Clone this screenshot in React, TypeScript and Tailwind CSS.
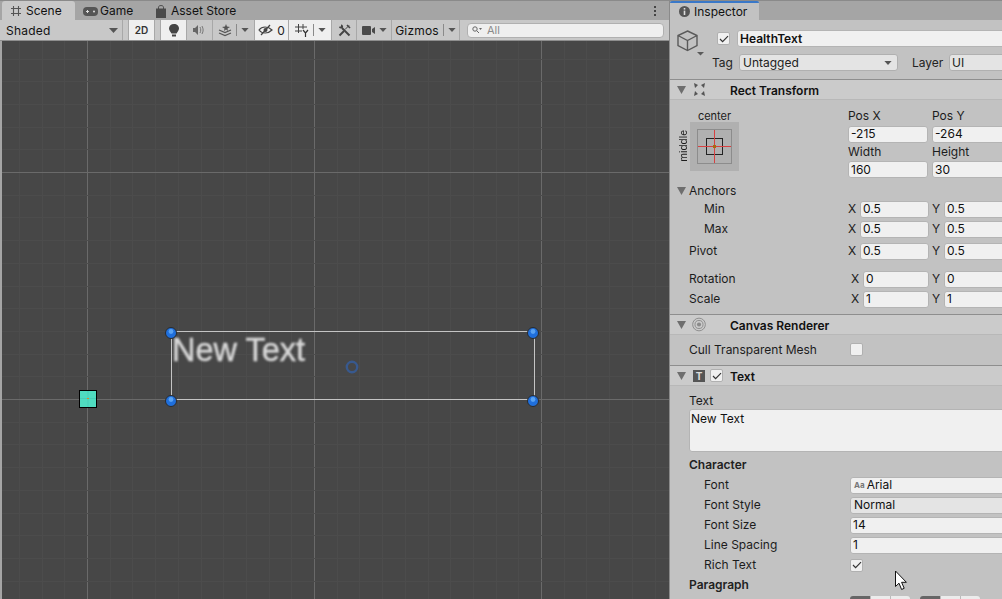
import React from "react";

const Tri = ({ c = "#555", w = 9, h = 5 }: { c?: string; w?: number; h?: number }) => (
  <svg width={w} height={h} viewBox="0 0 9 5" className="shrink-0"><path d="M0 0H9L4.5 5Z" fill={c} /></svg>
);

const Foldout = () => (
  <svg width="9" height="8" viewBox="0 0 9 8" className="shrink-0"><path d="M0 0H9L4.5 8Z" fill="#6e6e6e" /></svg>
);

const Check = () => (
  <svg width="10" height="8" viewBox="0 0 10 8"><path d="M1 4L3.6 6.6L9 1.2" fill="none" stroke="#333" strokeWidth="1.2" /></svg>
);

const Checkbox = ({ on }: { on?: boolean }) => (
  <div className="w-[13px] h-[13px] rounded-[2px] bg-[#f0f0f0] border border-[#b0b0b0] flex items-center justify-center shrink-0">
    {on ? <Check /> : null}
  </div>
);

const Field = ({ w, children, cls = "" }: { w: string; children: React.ReactNode; cls?: string }) => (
  <div className={`${w} ${cls} h-[17px] shrink-0 rounded-[3px] bg-[#f0f0f0] border border-[#b4b4b4] pl-[2px] flex items-center text-[12px] leading-none text-[#111]`}>
    {children}
  </div>
);

const ToolBtn = ({ w, on, children }: { w: string; on?: boolean; children: React.ReactNode }) => (
  <div className={`${w} ${on ? "bg-[#efefef]" : "bg-[#c8c8c8]"} h-[20px] shrink-0 flex items-center justify-center gap-[4px] border-r border-[#a8a8a8]`}>
    {children}
  </div>
);

const Sep = () => <div className="w-px h-[12px] bg-[#8a8a8a]" />;

const Vec = ({ label, sub, offset, top = "" }: { label: string; sub?: boolean; offset?: boolean; top?: string }) => {
  const val = label === "Rotation" ? "0" : label === "Scale" ? "1" : "0.5";
  return (
    <div className={`flex items-center h-[20px] ${top}`}>
      <div className={`${offset ? "w-[181px]" : "w-[178px]"} ${sub ? "pl-[34px]" : "pl-[19px]"} shrink-0`}>{label}</div>
      <div className="w-[12px] shrink-0">X</div>
      <Field w={offset ? "w-[66px]" : "w-[69px]"}>{val}</Field>
      <div className="w-[3px] shrink-0" />
      <div className="w-[12px] shrink-0">Y</div>
      <Field w="w-[80px]">{val}</Field>
    </div>
  );
};

const Prop = ({ label, children }: { label: string; children: React.ReactNode }) => (
  <div className="flex items-center h-[20px]">
    <div className="w-[180px] pl-[34px] shrink-0">{label}</div>
    {children}
  </div>
);

const CompHeader = ({ icon, check, title, top = "" }: { icon: React.ReactNode; check?: boolean; title: string; top?: string }) => (
  <div className={`h-[20px] ${top} bg-[#cbcbcb] border-b border-[#b8b8b8] flex items-center shrink-0`}>
    <div className="w-[7px] shrink-0" />
    <Foldout />
    <div className="w-[6px] shrink-0" />
    <div className="w-[14px] shrink-0 flex items-center justify-center">{icon}</div>
    {check ? (
      <>
        <div className="w-[4px] shrink-0" />
        <Checkbox on />
        <div className="w-[7px] shrink-0" />
      </>
    ) : (
      <div className="w-[24px] shrink-0" />
    )}
    <div className="font-semibold text-[#111] pt-[2px]">{title}</div>
  </div>
);

const Scene = () => {
  const xs = Array.from({ length: 32 }, (_, i) => 87 - 68.1 + i * 22.7 - 2);
  const ys = Array.from({ length: 26 }, (_, i) => 172 - 41 - 113.5 + i * 22.7);
  const handles = [
    [171, 333],
    [533, 333],
    [171, 401],
    [533, 401],
  ];
  return (
    <div className="relative flex-1 ml-[2px] bg-[#474747] overflow-hidden">
      <svg width="667" height="558" className="absolute left-0 top-0">
        {xs.map((x, i) => (
          <line key={"x" + i} x1={Math.round(x) + 0.5} x2={Math.round(x) + 0.5} y1={0} y2={558} stroke={(i - 3) % 10 === 0 ? "#6a6a6a" : "#4c4c4c"} />
        ))}
        {ys.map((y, i) => (
          <line key={"y" + i} y1={Math.round(y) + 0.5} y2={Math.round(y) + 0.5} x1={0} x2={667} stroke={(i - 5) % 10 === 0 ? "#6a6a6a" : "#4c4c4c"} />
        ))}
      </svg>
      <div className="absolute left-[169px] top-[290px] w-[364px] h-[69px] border border-[#c4c4c4]" />
      <div className="absolute left-[170px] top-[287px] text-[32.5px] leading-[44px] text-[#d8d8d8] blur-[0.8px] [-webkit-text-stroke:0.5px_#d8d8d8] whitespace-nowrap font-['Liberation_Sans',sans-serif]">New Text</div>
      <svg width="667" height="558" className="absolute left-0 top-0">
        {handles.map(([x, y], i) => (
          <g key={i}>
            <circle cx={x - 2} cy={y - 41} r="5.5" fill="#1f6fdc" stroke="#2b2b2b" strokeWidth="1" />
            <circle cx={x - 2} cy={y - 42.5} r="2.4" fill="#58a2f2" />
          </g>
        ))}
        <circle cx="350" cy="326" r="5.2" fill="none" stroke="#38598e" strokeWidth="2.4" />
        <rect x="77.5" y="349.5" width="17" height="17" fill="#4fdcc0" stroke="#000" />
        <line x1="86" y1="350" x2="86" y2="366" stroke="#48cdb8" />
        <line x1="78" y1="357.5" x2="94" y2="357.5" stroke="#48cdb8" />
        <rect x="85" y="357" width="2" height="1" fill="#e08a20" />
      </svg>
    </div>
  );
};

export default function App() {
  return (
    <div className="w-[1002px] h-[599px] flex overflow-hidden bg-[#a5a5a5] text-[12px] leading-none text-[#1c1c1c] font-['Inter',sans-serif]">
      <div className="w-[669px] h-full flex flex-col shrink-0">
        <div className="h-[20px] flex items-end border-t border-[#8a8a8a] pl-[2px] text-[#111] shrink-0">
          <div className="w-[73px] h-[19px] pt-px bg-[#c9c9c9] rounded-t-[3px] flex items-center pl-[8px] gap-[4px]">
            <svg width="12" height="12" viewBox="0 0 12 12"><path d="M3.5 1V11M8.5 1V11M1 3.5H11M1 8.5H11" stroke="#555" strokeWidth="1.1" /></svg>
            <span className="text-[12px]">Scene</span>
          </div>
          <div className="w-[73px] h-[19px] pt-px flex items-center pl-[8px] gap-[2px]">
            <svg width="15" height="9" viewBox="0 0 15 9"><rect width="15" height="9" rx="4" fill="#555" /><path d="M3 4.5H6M4.5 3V6" stroke="#ddd" /><circle cx="11" cy="4.5" r="1" fill="#ddd" /></svg>
            <span>Game</span>
          </div>
          <div className="flex-1 h-[19px] pt-px flex items-center pl-[8px] gap-[5px]">
            <svg width="10" height="13" viewBox="0 0 10 13"><path d="M0 3.5H10V13H0Z" fill="#4a4a4a" /><path d="M2.5 4V2.2C2.5 0 7.5 0 7.5 2.2V4" fill="none" stroke="#4a4a4a" /></svg>
            <span>Asset Store</span>
          </div>
          <div className="h-[19px] w-[14px] flex flex-col items-center justify-center gap-[2px] mr-[7px]">
            <div className="w-[2px] h-[2px] bg-[#444]" />
            <div className="w-[2px] h-[2px] bg-[#444]" />
            <div className="w-[2px] h-[2px] bg-[#444]" />
          </div>
        </div>
        <div className="h-[21px] bg-[#c8c8c8] border-b border-[#8e8e8e] flex items-center shrink-0 pl-[6px]">
          <div className="w-[116px] flex items-center justify-between pr-[4px] shrink-0"><span className="text-[#111] tracking-[0.2px] pt-px">Shaded</span><Tri /></div>
          <div className="w-[7px] h-[20px] border-x border-[#a8a8a8] shrink-0" />
          <ToolBtn w="w-[26px]" on><span className="text-[10px] font-semibold text-[#333]">2D</span></ToolBtn>
          <div className="w-[6px] h-[20px] border-r border-[#a8a8a8] shrink-0" />
          <ToolBtn w="w-[26px]" on>
            <svg width="10" height="13" viewBox="0 0 10 13"><path d="M5 0C2 0 0 2 0 4.5C0 6.5 1.5 7.5 2.5 9.5H7.5C8.5 7.5 10 6.5 10 4.5C10 2 8 0 5 0Z" fill="#444" /><rect x="3" y="10.5" width="4" height="2" fill="#444" /></svg>
          </ToolBtn>
          <ToolBtn w="w-[26px]">
            <svg width="13" height="10" viewBox="0 0 13 10"><path d="M0 3H2L5 0V10L2 7H0Z" fill="#666" /><path d="M7 2C8 4 8 6 7 8M9 1C10.5 4 10.5 6 9 9" fill="none" stroke="#777" /></svg>
          </ToolBtn>
          <ToolBtn w="w-[42px]">
            <svg width="14" height="13" viewBox="0 0 14 13"><path d="M1 6L7 8.5L13 6M1 9L7 11.5L13 9" fill="none" stroke="#555" strokeWidth="1.2" /><path d="M8 0L9 2.5L12 3L9.5 4.5L10 7L8 5.5L6 7L6.5 4.5L4 3L7 2.5Z" fill="#555" /></svg>
            <Sep />
            <Tri w={8} h={4} />
          </ToolBtn>
          <ToolBtn w="w-[34px]" on>
            <svg width="15" height="12" viewBox="0 0 15 12"><path d="M1 6C4 2 10 2 14 6C10 10 4 10 1 6Z" fill="none" stroke="#444" strokeWidth="1.2" /><circle cx="7.5" cy="6" r="2" fill="#444" /><path d="M3 11L12 1" stroke="#444" strokeWidth="1.2" /></svg>
            <span className="text-[#222] leading-none pt-px">0</span>
          </ToolBtn>
          <ToolBtn w="w-[43px]" on>
            <svg width="14" height="13" viewBox="0 0 14 13"><path d="M3.5 0V9M8 0V5M0 3H12M0 7H7" stroke="#444" /><path d="M8 6L10.5 9L13 6M10.5 9V13" fill="none" stroke="#333" strokeWidth="1.2" /></svg>
            <Sep />
            <Tri w={8} h={4} />
          </ToolBtn>
          <ToolBtn w="w-[25px]">
            <svg width="13" height="13" viewBox="0 0 13 13"><path d="M1.5 11.5L6 7" stroke="#444" strokeWidth="2" /><path d="M7 5.5L11 1.5" stroke="#444" strokeWidth="1" /><path d="M9 1L12 4" stroke="#444" strokeWidth="1.6" /><path d="M4 4L11.5 11.5" stroke="#444" strokeWidth="2" /><path d="M1 3.5A2.5 2.5 0 0 0 5 3.5A2.5 2.5 0 0 0 3 0.5V2.5H1.5Z" fill="#444" /></svg>
          </ToolBtn>
          <ToolBtn w="w-[35px]">
            <svg width="13" height="9" viewBox="0 0 13 9"><rect width="9" height="9" rx="1" fill="#4a4a4a" /><path d="M10 3L13 1V8L10 6Z" fill="#4a4a4a" /></svg>
            <Tri w={8} h={4} />
          </ToolBtn>
          <ToolBtn w="w-[68px]">
            <span className="text-[#111] tracking-[0.2px] pt-px">Gizmos</span>
            <Sep />
            <Tri w={8} h={4} />
          </ToolBtn>
          <div className="w-[7px] shrink-0" />
          <div className="w-[197px] h-[15px] rounded-[4px] bg-[#efefef] border border-[#b0b0b0] flex items-center pl-[4px] gap-[5px] shrink-0">
            <svg width="10" height="8" viewBox="0 0 10 8"><circle cx="3" cy="3" r="2.2" fill="none" stroke="#666" /><path d="M4.8 4.8L7 7" stroke="#666" /><path d="M7 2H10L8.5 4Z" fill="#666" /></svg>
            <span className="text-[#8a8a8a] text-[11px]">All</span>
          </div>
        </div>
        <Scene />
      </div>

      <div className="flex-1 h-full min-w-0 overflow-hidden flex flex-col border-l border-[#8a8a8a]">
        <div className="h-[20px] border-t border-[#8a8a8a] flex items-end shrink-0">
          <div className="w-[89px] h-[19px] bg-[#c2c2c2] border-t-2 border-[#3a78c8] rounded-t-[2px] flex items-center pl-[9px] gap-[4px] text-[#111]">
            <svg width="11" height="11" viewBox="0 0 11 11"><circle cx="5.5" cy="5.5" r="5.5" fill="#555" /><rect x="4.7" y="2" width="1.6" height="1.6" fill="#ddd" /><rect x="4.7" y="4.6" width="1.6" height="4.4" fill="#ddd" /></svg>
            <span>Inspector</span>
          </div>
        </div>
        <div className="flex-1 bg-[#c2c2c2] min-h-0">
          <div className="h-[60px] border-b border-[#8e8e8e] flex flex-col">
            <div className="flex items-start h-[34px] pl-[7px] pt-[10px]">
              <div className="w-[28px] h-[26px] shrink-0 flex items-start">
                <svg width="28" height="26" viewBox="0 0 28 26">
                  <path d="M10.5 1L20 5.5V15.5L10.5 20.5L1 15.5V5.5Z M1 5.5L10.5 10.5L20 5.5M10.5 10.5V20.5" fill="none" stroke="#5a5a5a" strokeWidth="1.4" />
                  <path d="M20 22H27L23.5 25.5Z" fill="#5a5a5a" />
                </svg>
              </div>
              <div className="w-[12px] shrink-0" />
              <div className="mt-[2px]"><Checkbox on /></div>
              <div className="w-[7px] shrink-0" />
              <div className="w-[280px] h-[17px] shrink-0 rounded-[3px] bg-[#f0f0f0] border border-[#b4b4b4] pl-[2px] flex items-center font-semibold text-[#111]">HealthText</div>
            </div>
            <div className="flex items-center h-[17px] pl-[42px] text-[#222]">
              <div className="w-[27px] shrink-0">Tag</div>
              <div className="w-[159px] h-[17px] shrink-0 rounded-[3px] bg-[#e4e4e4] border border-[#b0b0b0] pl-[3px] pr-[5px] flex items-center justify-between"><span>Untagged</span><Tri w={8} h={4} /></div>
              <div className="w-[14px] shrink-0" />
              <div className="w-[37px] shrink-0">Layer</div>
              <div className="w-[80px] h-[17px] shrink-0 rounded-[3px] bg-[#e4e4e4] border border-[#b0b0b0] pl-[2px] flex items-center">UI</div>
            </div>
          </div>
          <CompHeader
            title="Rect Transform"
            icon={
              <svg width="13" height="13" viewBox="0 0 13 13"><path d="M1 0L5 2L2 5Z M12 0L8 2L11 5Z M1 13L5 11L2 8Z M12 13L8 11L11 8Z" fill="#555" /></svg>
            }
          />
          <div className="flex h-[78px]">
            <div className="w-[178px] shrink-0 flex pl-[6px] pt-[6px]">
              <div className="w-[14px] shrink-0 flex items-end justify-center h-[64px] pb-[8px]">
                <span className="text-[10px] [writing-mode:vertical-rl] rotate-180">middle</span>
              </div>
              <div className="flex flex-col">
                <div className="h-[16px] w-[49px] text-center text-[11px] leading-[20px] whitespace-nowrap">center</div>
                <div className="w-[49px] h-[49px] bg-[#b0b0b0] flex items-center justify-center">
                  <svg width="35" height="35" viewBox="0 0 35 35">
                    <rect x="0.5" y="0.5" width="34" height="34" fill="none" stroke="#8c8c8c" />
                    <rect x="9.5" y="9.5" width="16" height="16" fill="none" stroke="#222" />
                    <path d="M17.5 1V34M1 17.5H34" stroke="#d84040" />
                    <rect x="16" y="16" width="3" height="3" fill="#a86a10" />
                  </svg>
                </div>
              </div>
            </div>
            <div className="flex flex-col pt-[7px]">
              <div className="flex h-[19px] items-center"><div className="w-[84px]">Pos X</div><div>Pos Y</div></div>
              <div className="flex gap-[4px] h-[18px]"><Field w="w-[80px]">-215</Field><Field w="w-[80px]">-264</Field></div>
              <div className="flex h-[18px] items-center"><div className="w-[84px]">Width</div><div>Height</div></div>
              <div className="flex gap-[4px]"><Field w="w-[80px]">160</Field><Field w="w-[80px]">30</Field></div>
            </div>
          </div>
          <div className="flex items-center h-[16px] mt-[5px] pl-[7px] gap-[3px]"><Foldout /><span>Anchors</span></div>
          <Vec label="Min" sub />
          <Vec label="Max" sub />
          <Vec label="Pivot" top="mt-[2px]" />
          <Vec label="Rotation" offset top="mt-[8px]" />
          <Vec label="Scale" offset />
          <div className="h-[6px] border-b border-[#8e8e8e]" />
          <CompHeader
            title="Canvas Renderer"
            icon={
              <svg width="15" height="15" viewBox="0 0 15 15"><circle cx="7.5" cy="7.5" r="6.8" fill="none" stroke="#8a8a8a" /><circle cx="7.5" cy="7.5" r="4.3" fill="none" stroke="#8a8a8a" /><circle cx="7.5" cy="7.5" r="2.2" fill="#8a8a8a" /></svg>
            }
          />
          <div className="h-[31px] border-b border-[#8e8e8e] flex items-center pb-[2px]">
            <div className="w-[180px] pl-[19px] shrink-0 pt-[2px]">Cull Transparent Mesh</div>
            <Checkbox />
          </div>
          <CompHeader
            check
            title="Text"
            icon={
              <div className="w-[12px] h-[12px] bg-[#555] flex items-center justify-center text-[#ddd] text-[10px] font-bold">T</div>
            }
          />
          <div className="pl-[19px] h-[23px] flex items-end pb-[2px]">Text</div>
          <div className="ml-[19px] h-[43px] w-[330px] rounded-[3px] bg-[#f0f0f0] border border-[#b4b4b4] pl-[1px] pt-[3px] text-[#111]">New Text</div>
          <div className="h-[23px] pl-[19px] flex items-center font-semibold text-[#222] pt-[2px]">Character</div>
          <Prop label="Font">
            <Field w="w-[170px]" cls="pl-[3px] gap-[2px]"><span className="text-[8px] font-bold text-[#777]">Aa</span><span>Arial</span></Field>
          </Prop>
          <Prop label="Font Style">
            <Field w="w-[170px]" cls="!bg-[#e4e4e4] pl-[3px]">Normal</Field>
          </Prop>
          <Prop label="Font Size">
            <Field w="w-[170px]">14</Field>
          </Prop>
          <Prop label="Line Spacing">
            <Field w="w-[170px]">1</Field>
          </Prop>
          <Prop label="Rich Text">
            <Checkbox on />
          </Prop>
          <div className="h-[20px] pl-[19px] flex items-center font-semibold text-[#222]">Paragraph</div>
          <div className="flex pl-[180px] mt-[1px]">
            <div className="w-[20px] h-[12px] bg-[#666] rounded-tl-[3px]" />
            <div className="w-[20px] h-[12px] bg-[#ececec] border-l border-[#bbb]" />
            <div className="w-[20px] h-[12px] bg-[#ececec] border-l border-[#bbb] rounded-tr-[3px]" />
            <div className="w-[10px]" />
            <div className="w-[20px] h-[12px] bg-[#666] rounded-tl-[3px]" />
            <div className="w-[20px] h-[12px] bg-[#ececec] border-l border-[#bbb]" />
            <div className="w-[20px] h-[12px] bg-[#ececec] border-l border-[#bbb] rounded-tr-[3px]" />
          </div>
        </div>
      </div>

      <svg width="14" height="21" viewBox="0 0 14 21" className="absolute left-[894px] top-[570px]">
        <path d="M1.5 1V16.5L5 13.2L7.6 19.5L10.2 18.3L7.6 12.3H12.4Z" fill="#fff" stroke="#111" strokeWidth="1" />
      </svg>
    </div>
  );
}
